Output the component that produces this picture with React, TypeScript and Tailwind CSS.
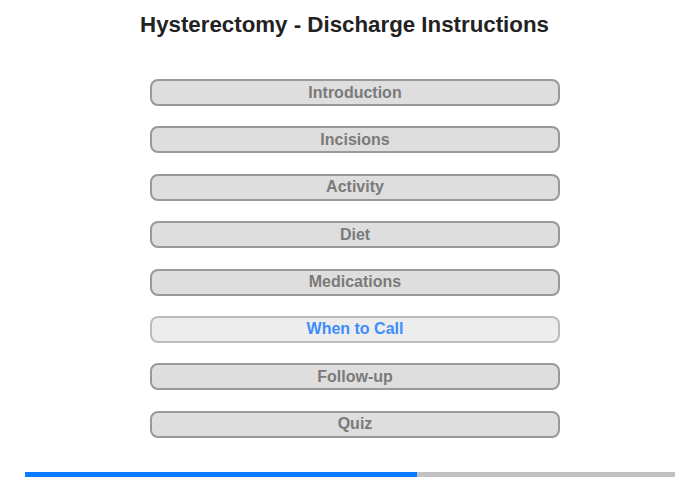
import React from 'react';

const sections = [
  'Introduction',
  'Incisions',
  'Activity',
  'Diet',
  'Medications',
  'When to Call',
  'Follow-up',
  'Quiz',
];

const active = 'When to Call';

const App: React.FC = () => {
  return (
    <div className="w-[700px] h-[480px] bg-white font-['Liberation_Sans',Arial,sans-serif] overflow-hidden">
      {/* Title */}
      <h1 className="pt-[13px] h-[79px] text-center text-[22.3px] leading-[24px] font-bold text-[#222] pr-[11px]">
        Hysterectomy - Discharge Instructions
      </h1>

      {/* Menu */}
      <div className="flex flex-col gap-[20.4px] ml-[150px] w-[410px]">
        {sections.map((s) => (
          <div
            key={s}
            className={`h-[27px] rounded-[8px] border-2 flex items-center justify-center text-[16px] font-bold ${
              s === active
                ? 'bg-[#ededed] border-[#bcbcbc] text-[#3f8cfb]'
                : 'bg-[#dedede] border-[#999] text-[#7a7a7a]'
            }`}
          >
            {s}
          </div>
        ))}
      </div>

      {/* Progress */}
      <div className="mt-[34px] mx-[25px] h-[5px] flex bg-[#c2c2c2]">
        <div className="w-[392px] bg-[#0a7cff]" />
      </div>
    </div>
  );
};

export default App;
